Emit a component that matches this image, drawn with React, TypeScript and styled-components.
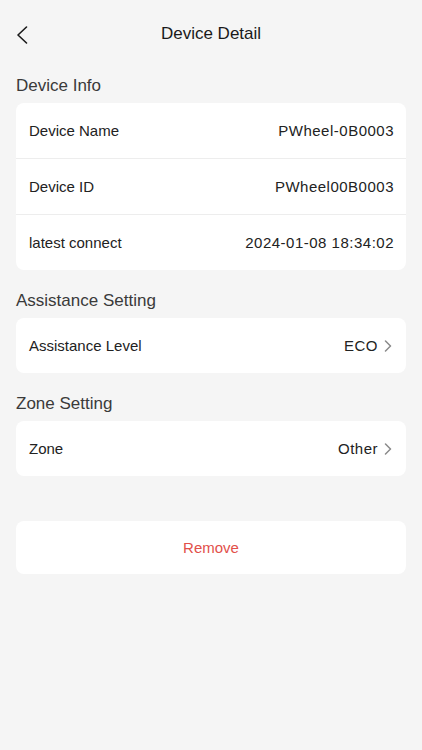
import React from 'react';
import styled, { createGlobalStyle } from 'styled-components';

const GlobalStyle = createGlobalStyle`
  * { box-sizing: border-box; }
  html, body {
    margin: 0;
    padding: 0;
    background: #f5f5f5;
    font-family: "Liberation Sans", Arial, sans-serif;
    -webkit-font-smoothing: antialiased;
  }
`;

const StyledPage = styled.div`
  min-height: 750px;
  background: #f5f5f5;
  padding: 0 16px;
`;

const StyledHeader = styled.div`
  position: relative;
  height: 68px;
  display: flex;
  align-items: center;
  justify-content: center;
`;

const StyledBack = styled.button`
  position: absolute;
  left: 0;
  top: 25px;
  width: 20px;
  height: 20px;
  padding: 0;
  border: none;
  background: transparent;
  display: flex;
  align-items: center;
  cursor: pointer;
`;

const StyledTitle = styled.h1`
  margin: 0;
  font-size: 17px;
  font-weight: 400;
  color: #1a1a1a;
`;

const StyledSectionTitle = styled.h2<{ $first?: boolean }>`
  margin: ${(p) => (p.$first ? '0' : '13px')} 0 0;
  height: 35px;
  line-height: 35px;
  font-size: 17px;
  font-weight: 400;
  color: #3a3a3a;
`;

const StyledCard = styled.div`
  background: #fff;
  border-radius: 8px;
  overflow: hidden;
`;

const StyledRow = styled.div`
  height: 55px;
  display: flex;
  align-items: center;
  justify-content: space-between;
  padding: 0 12px 0 13px;
  font-size: 15px;
  color: #222;
  & + & {
    height: 56px;
    border-top: 1px solid #ededed;
  }
`;

const StyledValue = styled.div<{ $link?: boolean }>`
  display: flex;
  align-items: center;
  gap: 6px;
  margin-right: ${(p) => (p.$link ? '2px' : '0')};
  color: #222;
  letter-spacing: 0.5px;
`;

const StyledRemove = styled.button`
  width: 100%;
  height: 53px;
  margin-top: 45px;
  border: none;
  border-radius: 8px;
  background: #fff;
  color: #e2504a;
  font-family: inherit;
  font-size: 15px;
  cursor: pointer;
`;

const Chevron = () => (
  <svg width="8" height="12" viewBox="0 0 8 12" fill="none">
    <path d="M1.5 1 L6.5 6 L1.5 11" stroke="#8a8a8a" strokeWidth="1.5" strokeLinecap="round" strokeLinejoin="round" />
  </svg>
);

const BackIcon = () => (
  <svg width="12" height="18" viewBox="0 0 12 18" fill="none">
    <path d="M10.5 1 L2 9 L10.5 17" stroke="#1a1a1a" strokeWidth="1.6" strokeLinecap="round" strokeLinejoin="round" />
  </svg>
);

const infoRows = [
  { label: 'Device Name', value: 'PWheel-0B0003' },
  { label: 'Device ID', value: 'PWheel00B0003' },
  { label: 'latest connect', value: '2024-01-08 18:34:02' },
];

export default function App() {
  return (
    <>
      <GlobalStyle />
      <StyledPage>
        <StyledHeader>
          <StyledBack aria-label="back">
            <BackIcon />
          </StyledBack>
          <StyledTitle>Device Detail</StyledTitle>
        </StyledHeader>

        <StyledSectionTitle $first>Device Info</StyledSectionTitle>
        <StyledCard>
          {infoRows.map((r) => (
            <StyledRow key={r.label}>
              <span>{r.label}</span>
              <StyledValue>{r.value}</StyledValue>
            </StyledRow>
          ))}
        </StyledCard>

        <StyledSectionTitle>Assistance Setting</StyledSectionTitle>
        <StyledCard>
          <StyledRow>
            <span>Assistance Level</span>
            <StyledValue $link>
              ECO
              <Chevron />
            </StyledValue>
          </StyledRow>
        </StyledCard>

        <StyledSectionTitle>Zone Setting</StyledSectionTitle>
        <StyledCard>
          <StyledRow>
            <span>Zone</span>
            <StyledValue $link>
              Other
              <Chevron />
            </StyledValue>
          </StyledRow>
        </StyledCard>

        <StyledRemove>Remove</StyledRemove>
      </StyledPage>
    </>
  );
}
